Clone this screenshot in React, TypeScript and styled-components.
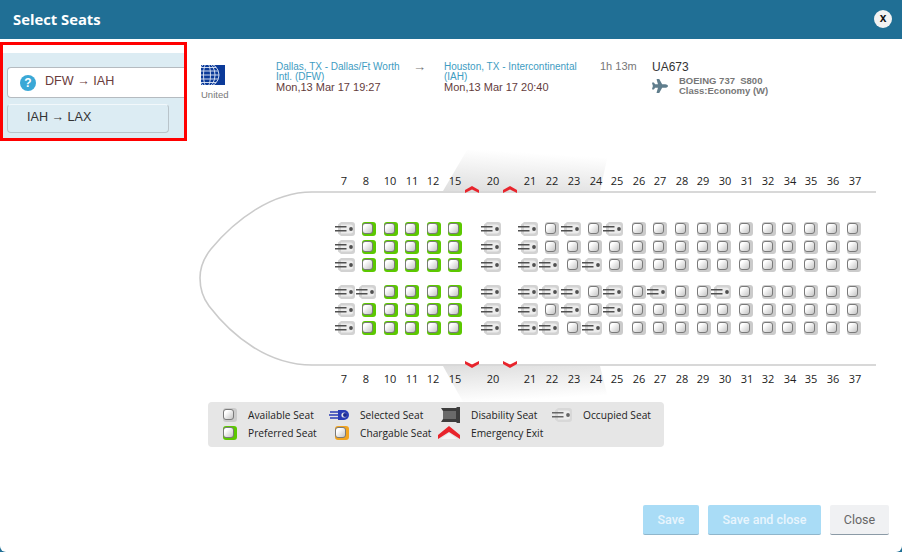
import React from "react";
import styled, { createGlobalStyle } from "styled-components";
import { FaPlane } from "react-icons/fa";

const Global = createGlobalStyle`
  html, body { margin: 0; padding: 0; background: #206f95; }
  body { font-family: "Liberation Sans", Arial, sans-serif; }
`;

const Modal = styled.div`
  width: 902px; height: 552px; display: flex; flex-direction: column;
  background: #fff; border-radius: 0 0 6px 6px; overflow: hidden;
`;
const Header = styled.header`
  flex: 0 0 39px; box-sizing: border-box; background: #206f95; display: flex; align-items: center;
  justify-content: space-between; padding: 0 10px 1px 13px;
`;
const Title = styled.h1`
  margin: 0 0 1px; color: #fff; font: 700 14.8px "Open Sans", sans-serif;
`;
const CloseX = styled.button`
  width: 18px; height: 18px; border: 0; border-radius: 50%; padding: 0 0 2px;
  background: #f2f2f2; color: #111; font: 700 12px "Liberation Sans", sans-serif;
`;
const Main = styled.div`flex: 1; display: flex; min-height: 0;`;

const Sidebar = styled.aside`
  flex: 0 0 187px; height: 99px; margin-top: 3px; box-sizing: border-box;
  border: 3px solid #f00; padding-top: 8px;
`;
const Band = styled.div`
  background: #dcecf3; height: 85px; box-sizing: border-box; padding: 14px 0 5px 4px;
  display: flex; flex-direction: column; gap: 6px;
`;
const ActiveTab = styled.div`
  height: 31px; box-sizing: border-box; background: #fff; border: 1px solid #b5bbc0;
  border-right: 0; border-radius: 4px 0 0 4px; display: flex; align-items: center;
  padding-left: 12px; gap: 9px; color: #6a3c3c; font-size: 12.6px; padding-bottom: 3px;
`;
const Help = styled.span`
  width: 16px; height: 16px; border-radius: 50%; background: #3aa8d6; color: #fff;
  font: 700 12px/16px "Liberation Sans", sans-serif; text-align: center; margin-top: 4px;
`;
const IdleTab = styled.div`
  width: 162px; height: 29px; box-sizing: border-box; background: #dcecf3;
  border: 1px solid #b9c4ca; border-top-color: #f2f8fb; border-radius: 4px;
  padding: 4px 0 0 19px; color: #333; font-size: 12.6px; line-height: 17px;
`;

const Content = styled.div`flex: 1; display: flex; flex-direction: column; min-width: 0;`;
const FlightRow = styled.section`
  flex: 0 0 111px; box-sizing: border-box; padding: 23px 0 0 14px; display: flex;
`;
const Carrier = styled.div`
  flex: 0 0 75px; padding-top: 3px; color: #777; font-size: 9.5px;
  svg { display: block; margin-bottom: 4px; }
`;
const Route = styled.div<{ $w: number }>`flex: 0 0 ${(p) => p.$w}px;`;
const Place = styled.div`color: #3e9cc2; font-size: 10px; line-height: 9.5px;`;
const When = styled.div`color: #643c3c; font-size: 11px; line-height: 12px;`;
const Arrow = styled.div`
  flex: 0 0 36px; color: #777; font-size: 13px; line-height: 9px; padding-left: 5px; box-sizing: border-box;
`;
const Duration = styled.div`
  flex: 0 0 52px; margin-left: 20px; color: #777; font-size: 11px; line-height: 9px;
`;
const Flight = styled.div`display: flex; flex-direction: column;`;
const FlightNo = styled.div`color: #333; font-size: 12px; line-height: 11px;`;
const Aircraft = styled.div`
  display: flex; align-items: center; gap: 11px; margin-top: 3px;
  svg { color: #5f7d8c; }
`;
const AircraftText = styled.div`
  color: #777; font-size: 9.5px; font-weight: 700; line-height: 9.5px;
`;

const SeatMap = styled.section`
  position: relative; flex: 0 0 252px; box-sizing: border-box; padding: 23px 0 0 154px;
`;
const Backdrop = styled.svg`position: absolute; left: 0; top: 0;`;
const SeatGrid = styled.div<{ $tracks: string }>`
  position: relative; display: grid; grid-template-columns: ${(p) => p.$tracks};
  grid-template-rows: 16px 31px 18px 18px 18px 9px 18px 18px 18px 34px 16px;
  align-items: center;
`;
const RowLabel = styled.div<{ $dx: number }>`
  width: 14px; height: 16px; display: flex; justify-content: center; white-space: nowrap;
  font: 400 11px/16px "Open Sans", sans-serif; color: #222;
  transform: translateX(${(p) => p.$dx}px);
`;
const Spacer = styled.div`grid-column: 1 / -1;`;
const SeatBox = styled.div<{ $tone: string }>`
  width: 14px; height: 14px; box-sizing: border-box; border-radius: 3px; background: ${(p) => p.$tone};
  padding: 1px 3px 2px 0;
  &::after {
    content: ""; display: block; width: 100%; height: 100%; box-sizing: border-box;
    border: 1px solid #7a7a7a; border-radius: 3px;
    background: linear-gradient(135deg, #fff 25%, #c4c4c4 100%);
  }
`;
const OccupiedBox = styled.div`
  width: 14px; height: 14px;
  svg { display: block; margin-left: -6px; }
`;
const Exit = styled.svg<{ $x: number; $y: number }>`
  position: absolute; left: ${(p) => p.$x}px; top: ${(p) => p.$y}px;
`;

const Legend = styled.section`
  position: relative; margin-left: 21px; width: 456px; height: 45px; box-sizing: border-box;
  background: #e6e6e6; border-radius: 4px; padding: 4px 0 0 0;
  display: grid; grid-template-columns: 40px 72px 40px 71px 40px 72px 40px auto;
  grid-auto-rows: 18px; align-items: center; color: #222; white-space: nowrap;
  font: 400 10.2px "Open Sans", sans-serif;
`;
const LegendIcon = styled.div`
  display: flex; justify-content: flex-end; padding-right: 11px; align-items: center;
`;
const Footer = styled.footer`
  margin-top: auto; display: flex; justify-content: flex-end; gap: 9px; padding: 0 13px 17px 0;
`;
const Btn = styled.button<{ $w: number; $muted?: boolean }>`
  width: ${(p) => p.$w}px; height: 30px; border: 0; border-radius: 2px; padding: 0;
  background: ${(p) => (p.$muted ? "#f0f1f3" : "#a9dcf6")};
  border-bottom: 1px solid ${(p) => (p.$muted ? "#8b9aa6" : "#8fb6cc")};
  color: ${(p) => (p.$muted ? "#666" : "#e8f5fd")};
  font: ${(p) => (p.$muted ? 400 : 500)} 12.5px Roboto, sans-serif;
`;

const columns: [number, number, number][] = [
  [7, 341, -4], [8, 362, -3], [10, 384, -1], [11, 405, 0], [12, 427, -1], [15, 448, 0], [20, 487, -1], [21, 524, -1],
  [22, 545, 0], [23, 567, 0], [24, 588, 1], [25, 609, 1], [26, 632, 0], [27, 653, 0], [28, 675, 0], [29, 697, -1],
  [30, 717, 1], [31, 739, 1], [32, 762, -1], [34, 782, 1], [35, 804, 0], [36, 826, 0], [37, 847, 1],
];
const tracks = columns.map((c, i) => `${i < columns.length - 1 ? columns[i + 1][1] - c[1] : 15}px`).join(" ");

const blocks = [
  ["OPPPPPOOAOAOAAAAAAAAAAA", "OPPPPPOOAAAAAAAAAAAAAAA", "OPPPPPOOOAOAAAAAAAAAAAA"],
  ["OOPPPPOOOOAOAOAAOAAAAAA", "OPPPPPOOAOAOAAAAAAAAAAA", "OPPPPPOOOAOAAAAAAAAAAAA"],
];

const OccupiedIcon = ({ color = "#d2d2d2", ink = "#505050" }: { color?: string; ink?: string }) => (
  <svg width="20" height="14" viewBox="0 0 20 14">
    <path d="M6 0h11a3 3 0 0 1 3 3v8a3 3 0 0 1-3 3H6l-3-2.5v-9z" fill={color} />
    <path d="M6 2.5h9.5A2.5 2.5 0 0 1 18 5v4a2.5 2.5 0 0 1-2.5 2.5H6z" fill="#ececec" />
    <path d="M0 4.8h11.5M0 8.8h11.5" stroke={ink} strokeWidth="1.5" />
    <circle cx="16" cy="7" r="1.9" fill={ink} />
  </svg>
);
const Seat = ({ kind }: { kind: string }) =>
  kind === "O" ? (
    <OccupiedBox><OccupiedIcon /></OccupiedBox>
  ) : (
    <SeatBox $tone={kind === "P" ? "#5cc800" : "#cbcbcb"} />
  );

const ExitMark = ({ x, y, down }: { x: number; y: number; down?: boolean }) => (
  <Exit $x={x} $y={y} width="14" height="8" viewBox="0 0 14 8">
    <path d={down ? "M0 1l7 3.5L14 1v3L7 8 0 4z" : "M0 7l7-3.5L14 7V4L7 0 0 4z"} fill="#e8242c" />
  </Exit>
);

const Globe = () => (
  <svg width="24" height="20" viewBox="0 0 24 20">
    <rect width="24" height="20" fill="#0b3a99" />
    <g fill="none" stroke="#dfe8f6" strokeWidth=".9">
      <circle cx="6" cy="10" r="12" />
      <ellipse cx="6" cy="10" rx="8" ry="12" />
      <ellipse cx="6" cy="10" rx="3.5" ry="12" />
      <path d="M-6 10h24M-5 6h22M-5 14h22M-3 2.5h18M-3 17.5h18" />
    </g>
  </svg>
);

const App = () => (
  <>
    <Global />
    <Modal>
      <Header>
        <Title>Select Seats</Title>
        <CloseX>x</CloseX>
      </Header>
      <Main>
        <Sidebar>
          <Band>
            <ActiveTab><Help>?</Help>DFW → IAH</ActiveTab>
            <IdleTab>IAH → LAX</IdleTab>
          </Band>
        </Sidebar>
        <Content>
          <FlightRow>
            <Carrier><Globe />United</Carrier>
            <Route $w={132}>
              <Place>Dallas, TX - Dallas/Ft Worth Intl. (DFW)</Place>
              <When>Mon,13 Mar 17 19:27</When>
            </Route>
            <Arrow>→</Arrow>
            <Route $w={136}>
              <Place>Houston, TX - Intercontinental (IAH)</Place>
              <When>Mon,13 Mar 17 20:40</When>
            </Route>
            <Duration>1h 13m</Duration>
            <Flight>
              <FlightNo>UA673</FlightNo>
              <Aircraft>
                <FaPlane size={16} />
                <AircraftText>BOEING 737 &nbsp;S800<br />Class:Economy (W)</AircraftText>
              </Aircraft>
            </Flight>
          </FlightRow>
          <SeatMap>
            <Backdrop width="715" height="252" viewBox="187 150 715 252">
              <defs>
                <linearGradient id="wingTop" x1="0" y1="1" x2="0.25" y2="0">
                  <stop offset="0" stopColor="#dedede" />
                  <stop offset="1" stopColor="#fff" />
                </linearGradient>
                <linearGradient id="wingBottom" x1="0" y1="0" x2="0.25" y2="1">
                  <stop offset="0" stopColor="#dedede" />
                  <stop offset="1" stopColor="#fff" />
                </linearGradient>
              </defs>
              <path d="M443 191L467 150H609L600 191Z" fill="url(#wingTop)" />
              <path d="M443 366L463 402H609L600 366Z" fill="url(#wingBottom)" />
              <path
                d="M876 192H312C272 192 235 220 211 249C203 259 200 268 200 278C200 290 203 298 209 306C232 336 268 365 312 365H876"
                fill="none" stroke="#cbcbcb" strokeWidth="1.6"
              />
            </Backdrop>
            <ExitMark x={278} y={36} />
            <ExitMark x={316} y={36} />
            <ExitMark x={278} y={210} down />
            <ExitMark x={316} y={210} down />
            <SeatGrid $tracks={tracks}>
              {columns.map((c) => <RowLabel key={c[0]} $dx={c[2]}>{c[0]}</RowLabel>)}
              <Spacer />
              {blocks[0].map((r, i) => [...r].map((k, j) => <Seat key={`a${i}${j}`} kind={k} />))}
              <Spacer />
              {blocks[1].map((r, i) => [...r].map((k, j) => <Seat key={`b${i}${j}`} kind={k} />))}
              <Spacer />
              {columns.map((c) => <RowLabel key={`l${c[0]}`} $dx={c[2]}>{c[0]}</RowLabel>)}
            </SeatGrid>
          </SeatMap>
          <Legend>
            <LegendIcon><SeatBox $tone="#cbcbcb" /></LegendIcon><span>Available Seat</span>
            <LegendIcon>
              <svg width="20" height="12" viewBox="0 0 20 12">
                <path d="M9 1h6a5 5 0 0 1 0 10H9z" fill="#2a3db5" />
                <path d="M1 3h11M0 6h12M1 9h11" stroke="#2a3db5" strokeWidth="1.3" />
                <circle cx="15" cy="6" r="2.6" fill="#e6e6e6" />
                <circle cx="16" cy="6" r="2" fill="#1b2a8f" />
              </svg>
            </LegendIcon><span>Selected Seat</span>
            <LegendIcon>
              <svg width="19" height="16" viewBox="0 0 19 16">
                <path d="M0 1h15l1-1h3v16h-3l-1-1H0l2-3V4z" fill="#3d3d3d" />
                <rect x="2" y="4" width="13" height="8" fill="#6a6a6a" />
              </svg>
            </LegendIcon><span>Disability Seat</span>
            <LegendIcon><OccupiedIcon color="#d8d8d8" ink="#666" /></LegendIcon><span>Occupied Seat</span>
            <LegendIcon><SeatBox $tone="#5cc800" /></LegendIcon><span>Preferred Seat</span>
            <LegendIcon><SeatBox $tone="#f2a41f" /></LegendIcon><span>Chargable Seat</span>
            <LegendIcon>
              <svg width="22" height="14" viewBox="0 0 22 14">
                <path d="M0 9L11 0l11 9v4L11 6 0 13z" fill="#e8242c" />
                <path d="M3 13l8-6 8 6z" fill="#f4f4f4" />
              </svg>
            </LegendIcon><span>Emergency Exit</span>
          </Legend>
          <Footer>
            <Btn $w={56}>Save</Btn>
            <Btn $w={113}>Save and close</Btn>
            <Btn $w={59} $muted>Close</Btn>
          </Footer>
        </Content>
      </Main>
    </Modal>
  </>
);

export default App;
